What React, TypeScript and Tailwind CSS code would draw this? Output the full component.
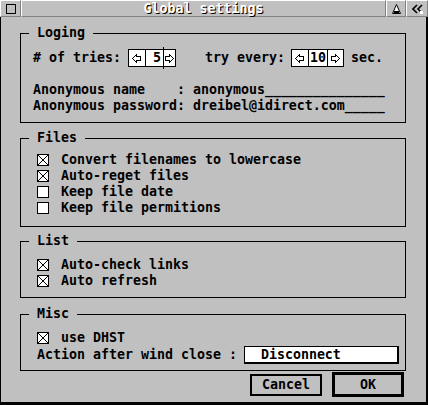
import React from "react";

const GRAY = "bg-[#c0c0c0]";

function Arrow({ dir }: { dir: "l" | "r" }) {
  const pts =
    dir === "l"
      ? "0.5,4.5 4.5,0.5 4.5,2.5 8.5,2.5 8.5,6.5 4.5,6.5 4.5,8.5"
      : "8.5,4.5 4.5,0.5 4.5,2.5 0.5,2.5 0.5,6.5 4.5,6.5 4.5,8.5";
  return (
    <svg width="9" height="9" viewBox="0 0 9 9">
      <polygon points={pts} fill="none" stroke="black" strokeWidth="1" shapeRendering="crispEdges" />
    </svg>
  );
}

function CB({ checked }: { checked?: boolean }) {
  return (
    <div className="relative w-[12px] h-[12px] border border-black bg-white shrink-0">
      {checked && (
        <svg className="absolute inset-0" width="10" height="10" viewBox="0 0 10 10">
          <path d="M0 0L10 10M10 0L0 10" stroke="black" strokeWidth="1" />
        </svg>
      )}
    </div>
  );
}

function CheckRow({ checked, label }: { checked?: boolean; label: string }) {
  return (
    <div className="h-[16px] flex items-center pl-[16px]">
      <CB checked={checked} />
      <span className="ml-[12px] whitespace-pre">{label}</span>
    </div>
  );
}

function Group({
  title,
  className,
  children,
}: {
  title: string;
  className: string;
  children: React.ReactNode;
}) {
  return (
    <div className={`relative border border-black shrink-0 ${className}`}>
      <div className={`absolute left-[8px] top-[-9px] px-[8px] leading-[16px] ${GRAY}`}>{title}</div>
      {children}
    </div>
  );
}

export default function App() {
  return (
    <div
      className={`w-[428px] h-[405px] ${GRAY} flex flex-col overflow-hidden font-['DejaVu_Sans_Mono',monospace] font-bold text-[13.29px] leading-[16px] text-black`}
    >
      {/* Title bar */}
      <div className="h-[17px] flex shrink-0">
        <div className="w-[21px] h-full border border-white border-r-[#808080] border-b-[#808080] flex items-center justify-center">
          <div className="w-[10px] h-[10px] border border-black" />
        </div>
        <div className="flex-1 h-full border border-white border-r-[#808080] border-b-[#808080] flex items-center justify-center text-white [text-shadow:1px_1px_0_#000]">
          Global settings
        </div>
        <div className="w-[20px] h-full border border-white border-r-[#808080] border-b-[#808080] flex items-center justify-center">
          <svg width="9" height="10" viewBox="0 0 9 10">
            <polygon points="4.5,0.5 8.5,9.5 0.5,9.5" fill="white" stroke="black" strokeWidth="1" />
            <rect x="2" y="7" width="5" height="2" fill="black" />
          </svg>
        </div>
        <div className="w-[22px] h-full border border-white border-r-[#808080] border-b-[#808080] flex items-center justify-center">
          <svg width="11" height="10" viewBox="0 0 11 10">
            <path d="M5 1L1 5L5 9" fill="none" stroke="black" strokeWidth="1.6" />
            <path d="M10 1L6 5L10 9" fill="none" stroke="black" strokeWidth="1.6" />
            <rect x="8" y="7" width="3" height="3" fill="white" />
          </svg>
        </div>
      </div>

      {/* Body */}
      <div className="flex-1 flex flex-col border-l border-r-2 border-b-[3px] border-black pl-[19px] pr-[20px]">
        <Group title="Loging" className="mt-[16px] h-[90px] pt-[15px] pl-[12px]">
          <div className="h-[18px] flex items-center">
            <span>{"# of tries:"}</span>
            <div className="relative ml-[7px] h-[18px] flex border border-black bg-white">
              <div className="w-[16px] flex items-center justify-center">
                <Arrow dir="l" />
              </div>
              <div className="w-[18px] border-l border-black flex items-center justify-end pr-[2px]">5</div>
              <div className="w-[12px] border-l border-black flex items-center justify-center">
                <Arrow dir="r" />
              </div>
              <div className="absolute left-[34px] top-[-3px] w-[1px] h-[22px] bg-black" />
            </div>
            <span className="ml-[29px]">try every:</span>
            <div className="ml-[6px] h-[18px] flex border border-black bg-white">
              <div className="w-[16px] flex items-center justify-center">
                <Arrow dir="l" />
              </div>
              <div className="w-[19px] border-l border-black flex items-center justify-center">10</div>
              <div className="w-[16px] border-l border-black flex items-center justify-center">
                <Arrow dir="r" />
              </div>
            </div>
            <span className="ml-[7px]">sec.</span>
          </div>
          <div className="mt-[15px] whitespace-pre">{"Anonymous name    : anonymous_______________"}</div>
          <div className="whitespace-pre">{"Anonymous password: dreibel@idirect.com_____"}</div>
        </Group>

        <Group title="Files" className="mt-[15px] h-[89px] pt-[13px]">
          <CheckRow checked label="Convert filenames to lowercase" />
          <CheckRow checked label="Auto-reget files" />
          <CheckRow label="Keep file date" />
          <CheckRow label="Keep file permitions" />
        </Group>

        <Group title="List" className="mt-[14px] h-[57px] pt-[15px]">
          <CheckRow checked label="Auto-check links" />
          <CheckRow checked label="Auto refresh" />
        </Group>

        <Group title="Misc" className="mt-[16px] h-[57px] pt-[15px]">
          <CheckRow checked label="use DHST" />
          <div className="h-[18px] flex items-center pl-[16px]">
            <span className="whitespace-pre">{"Action after wind close :"}</span>
            <div className="ml-[7px] w-[155px] h-[18px] bg-white border-l border-t border-r-2 border-b-2 border-black flex items-center pl-[16px]">
              Disconnect
            </div>
          </div>
        </Group>

        <div className="mt-[1px] h-[25px] flex items-center justify-end pr-[2px] shrink-0">
          <div className="w-[72px] h-[22px] border-2 border-black flex items-center justify-center">Cancel</div>
          <div className="ml-[10px] w-[72px] h-[25px] border-[3px] border-black flex items-center justify-center">OK</div>
        </div>
      </div>
    </div>
  );
}
